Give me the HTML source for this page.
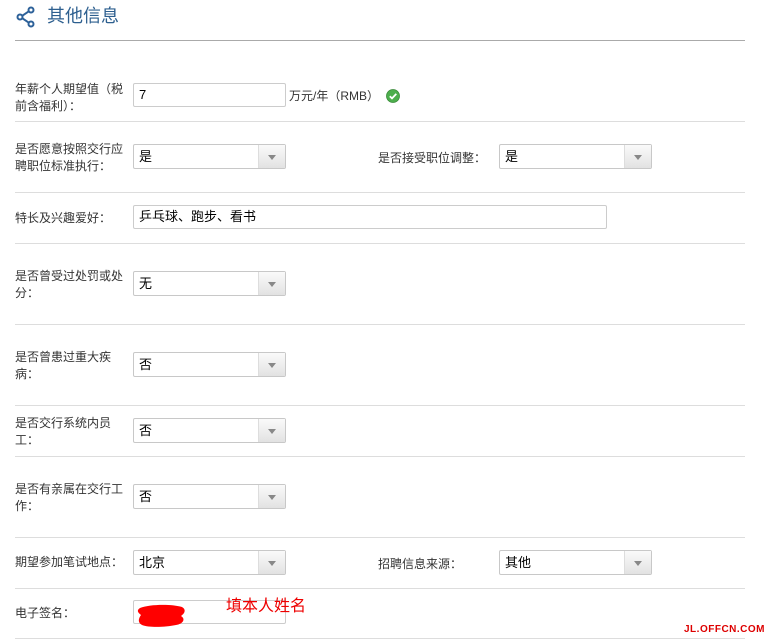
<!DOCTYPE html>
<html><head><meta charset="utf-8"><style>
*{margin:0;padding:0;box-sizing:border-box}
body{width:766px;height:641px;background:#fff;position:relative;overflow:hidden;font-family:"Liberation Sans","Noto Sans CJK SC",sans-serif;font-size:12px;color:#333}
.a{position:absolute}
.hr{position:absolute;left:15px;width:730px;height:1px;background:#ddd}
.lab{position:absolute;left:15px;width:112px;line-height:17px;font-size:12px;color:#333}
.inp{position:absolute;height:24px;border:1px solid #ccc;border-radius:2px;background:#fff;font-size:13px;color:#000;padding-left:5px;line-height:22px}
.sel{position:absolute;width:153px;height:25px;border:1px solid #c8c8c8;border-radius:2px;background:#fff;font-size:13px;color:#000;padding-left:5px;line-height:23px}
.sel:after{content:"";position:absolute;right:0;top:0;width:26px;height:23px;background:linear-gradient(#fafafa,#e2e2e2);border-left:1px solid #ddd}
.sel:before{content:"";position:absolute;right:9px;top:10px;border-left:4px solid transparent;border-right:4px solid transparent;border-top:5px solid #888;z-index:2}
</style></head><body>
<svg class="a" style="left:15px;top:6px" width="22" height="22" viewBox="0 0 22 22"><g fill="none" stroke="#2d6199" stroke-width="2"><circle cx="16" cy="4" r="2.5"/><circle cx="5" cy="11" r="2.5"/><circle cx="16" cy="18" r="2.5"/><path d="M7.2 9.8L13.8 5.3M7.2 12.2L13.8 16.7"/></g></svg>
<div class="a" style="left:47px;top:4px;font-size:18px;color:#2d5f8f;line-height:24px">其他信息</div>
<div class="a" style="left:15px;top:40px;width:730px;height:1px;background:#aaa"></div>

<div class="lab" style="top:81px">年薪个人期望值（税前含福利）：</div>
<div class="inp" style="left:133px;top:83px;width:153px">7</div>
<div class="a" style="left:289px;top:87px;font-size:12px">万元/年（RMB）</div>
<svg class="a" style="left:386px;top:89px" width="14" height="14"><circle cx="7" cy="7" r="6.5" fill="#4cae4c" stroke="#3a8a3a" stroke-width="0.8"/><path d="M3.8 7.2l2.2 2.2 4.3-4.5" stroke="#fff" stroke-width="1.8" fill="none"/></svg>
<div class="hr" style="top:121px"></div>

<div class="lab" style="top:141px">是否愿意按照交行应聘职位标准执行：</div>
<div class="sel" style="left:133px;top:144px">是</div>
<div class="a" style="left:378px;top:149px">是否接受职位调整：</div>
<div class="sel" style="left:499px;top:144px">是</div>
<div class="hr" style="top:192px"></div>

<div class="lab" style="top:210px">特长及兴趣爱好：</div>
<div class="inp" style="left:133px;top:205px;width:474px">乒乓球、跑步、看书</div>
<div class="hr" style="top:243px"></div>

<div class="lab" style="top:268px">是否曾受过处罚或处分：</div>
<div class="sel" style="left:133px;top:271px">无</div>
<div class="hr" style="top:324px"></div>

<div class="lab" style="top:349px">是否曾患过重大疾病：</div>
<div class="sel" style="left:133px;top:352px">否</div>
<div class="hr" style="top:405px"></div>

<div class="lab" style="top:415px">是否交行系统内员工：</div>
<div class="sel" style="left:133px;top:418px">否</div>
<div class="hr" style="top:456px"></div>

<div class="lab" style="top:481px">是否有亲属在交行工作：</div>
<div class="sel" style="left:133px;top:484px">否</div>
<div class="hr" style="top:537px"></div>

<div class="lab" style="top:554px">期望参加笔试地点：</div>
<div class="sel" style="left:133px;top:550px">北京</div>
<div class="a" style="left:378px;top:555px">招聘信息来源：</div>
<div class="sel" style="left:499px;top:550px">其他</div>
<div class="hr" style="top:588px"></div>

<div class="lab" style="top:605px">电子签名：</div>
<div class="inp" style="left:133px;top:600px;width:153px"></div>
<svg class="a" style="left:136px;top:604px" width="52" height="24"><path d="M4 4C14 0 36 0 46 3C51 6 48 10 45 12C50 15 47 20 40 21C30 23 14 24 6 21C1 18 3 14 5 11C1 8 1 6 4 4Z" fill="#f00"/></svg>
<div class="a" style="left:226px;top:597px;font-size:16px;color:#e00;line-height:20px">填本人姓名</div>
<div class="a" style="left:15px;top:638px;width:730px;height:1px;background:#ddd"></div>
<div class="a" style="left:684px;top:624px;font-size:10px;color:#d00;font-weight:bold;letter-spacing:0.5px">JL.OFFCN.COM</div>
</body></html>
